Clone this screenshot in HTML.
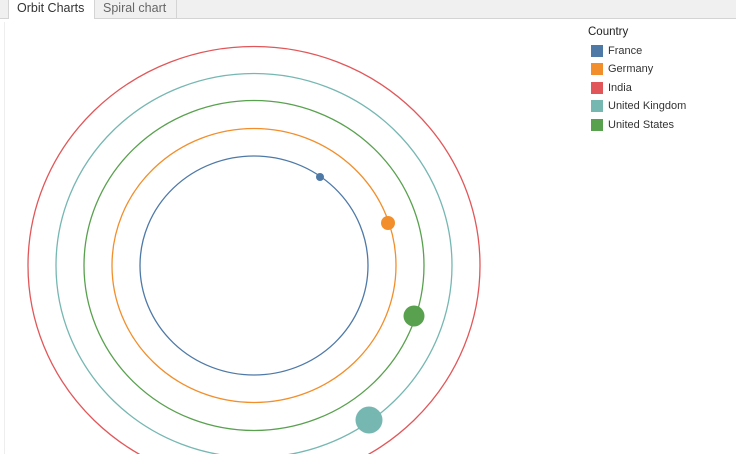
<!DOCTYPE html>
<html><head><style>
html,body{margin:0;width:736px;height:454px;overflow:hidden}
body{background:#fff;font-family:"Liberation Sans",sans-serif;position:relative}
.bar{position:absolute;left:0;top:0;width:736px;height:18px;background:#f0f0f0;border-bottom:1px solid #d4d4d4}
.tab{position:absolute;top:0;height:18px;font-size:12.5px;line-height:17px;padding:0 8px;box-sizing:border-box}
.t1{left:8px;width:87px;background:#fff;color:#333;border-left:1px solid #d4d4d4;border-right:1px solid #d4d4d4;height:19px}
.t2{left:95px;width:82px;color:#666;border-right:1px solid #d4d4d4}
.leg{position:absolute;left:588px;top:23px;font-size:11px;color:#333}
.leg div{height:18.5px;display:flex;align-items:center}
.leg span{display:inline-block;width:12px;height:12px;margin-right:5px;margin-left:3px}
.leg .h{font-size:11.5px;color:#222}
</style></head><body>
<div class="bar"></div>
<div class="tab t1">Orbit Charts</div>
<div class="tab t2">Spiral chart</div>
<div style="position:absolute;left:4px;top:22px;width:1px;height:432px;background:#eee"></div>
<svg width="736" height="454" style="position:absolute;left:0;top:0;display:block">
<g fill="none" stroke-width="1.3">
<ellipse cx="254" cy="265.5" rx="114" ry="109.5" stroke="#4e79a7"/>
<ellipse cx="254" cy="265.5" rx="142" ry="137" stroke="#f28e2b"/>
<ellipse cx="254" cy="265.5" rx="170" ry="165" stroke="#59a14f"/>
<ellipse cx="254" cy="265.5" rx="198" ry="192" stroke="#76b7b2"/>
<ellipse cx="254" cy="265.5" rx="226" ry="219" stroke="#e15759"/>
</g>
<circle cx="320" cy="177" r="4" fill="#4e79a7"/>
<circle cx="388" cy="223" r="7" fill="#f28e2b"/>
<circle cx="414" cy="316" r="10.5" fill="#59a14f"/>
<circle cx="369" cy="420" r="13.5" fill="#76b7b2"/>
</svg>
<div class="leg">
<div class="h">Country</div>
<div><span style="background:#4e79a7"></span>France</div>
<div><span style="background:#f28e2b"></span>Germany</div>
<div><span style="background:#e15759"></span>India</div>
<div><span style="background:#76b7b2"></span>United Kingdom</div>
<div><span style="background:#59a14f"></span>United States</div>
</div>
</body></html>
